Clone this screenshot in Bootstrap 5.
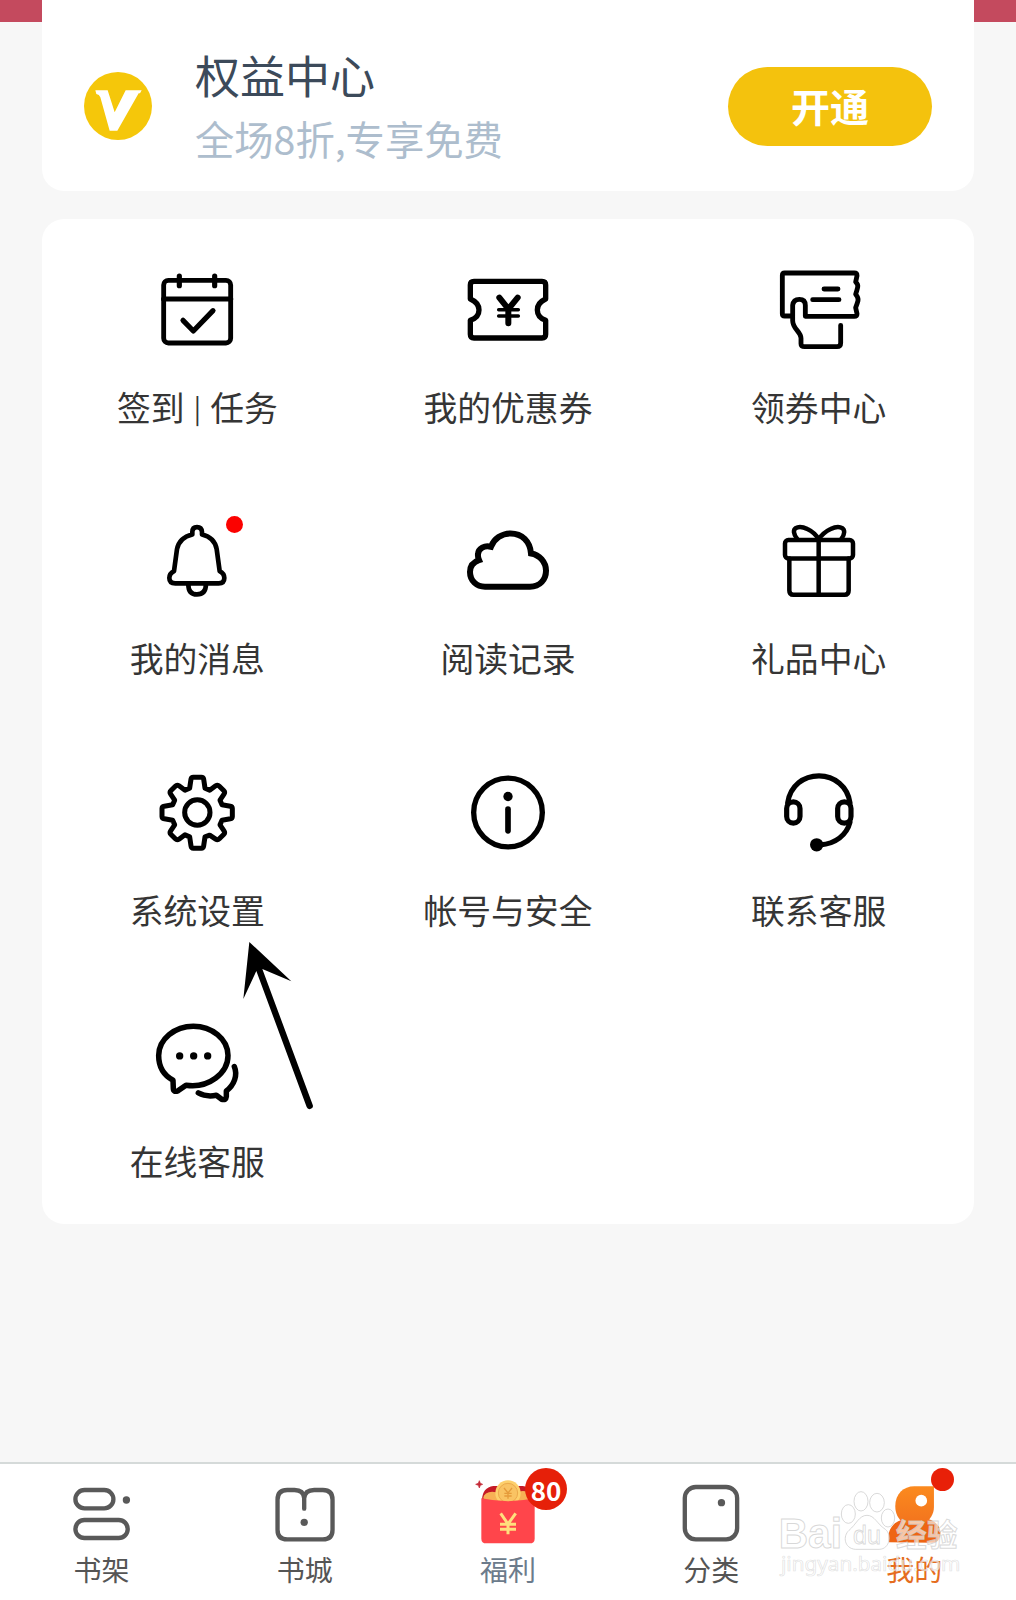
<!DOCTYPE html>
<html lang="zh-CN">
<head>
<meta charset="utf-8">
<meta name="viewport" content="width=device-width, initial-scale=1">
<title>我的</title>
<link href="https://cdn.jsdelivr.net/npm/bootstrap@5.3.0/dist/css/bootstrap.min.css" rel="stylesheet">
<style>
body{font-family:"Noto Sans CJK SC",sans-serif;background:#f7f7f7;color:#353535;height:1600px;overflow:hidden}
.page-top{background:linear-gradient(#c44a5e 0 21.5px,#f7f7f7 21.5px)}
.app-main{padding:0 42px;gap:28px}
.vip-card{height:191px;border-radius:0 0 22px 22px;padding:21px 42px 0}
.vip-logo{width:68px;height:68px;margin-right:43px}
.vip-title{font-size:45px;line-height:56px;color:#3c4a5a}
.vip-sub{font-size:39.3px;line-height:56px;color:#adbdcd;margin-top:7px}
.vip-btn,.vip-btn:hover{width:204px;height:79px;background:#f4c20d;color:#fff;font-size:39px;font-weight:700;line-height:1;border:0;padding:0 0 1px}
.menu-card{height:1005px;border-radius:22px}
.menu-cell{height:251.25px;padding-top:41px;font-size:33.8px;line-height:40px;color:#353535}
.menu-cell svg{width:100px;height:100px;margin-bottom:27px}
.label-bar{font-size:27px;margin:0 1.6px;position:relative;top:-2px}
.ico{fill:none;stroke:#000;stroke-linecap:round;stroke-linejoin:round;display:block}
.dot-red{width:17px;height:17px;background:#fb0200;left:225.5px;top:515.5px}
.tabbar{height:138px;border-top:2px solid #d5dad9}
.tab{width:20%;padding-top:2px;font-size:28px;line-height:36px;color:#555}
.tab svg{width:100px;height:80px;margin-bottom:5px}
.tab .ico{stroke:#595959}
.tab-badge{background:#e62009;color:#fff;width:42px;height:42px;left:525px;top:1468px;font-size:26px;font-weight:700;line-height:43px}
.tab-dot{background:#e82008;width:23px;height:23px;left:931px;top:1468px}
.pointer{left:230px;top:930px;width:100px;height:190px}
.wmark{left:770px;top:1480px;width:200px;height:110px}
</style>
<script src="https://cdn.jsdelivr.net/npm/bootstrap@5.3.0/dist/js/bootstrap.bundle.min.js"></script>
</head>
<body class="d-flex flex-column position-relative page-top">
<main class="app-main d-flex flex-column flex-grow-1">
  <section class="vip-card bg-white d-flex align-items-center">
    <svg class="vip-logo flex-shrink-0" viewBox="253 216 204 204"><circle cx="355" cy="318" r="102" fill="#f5c70a"/><path fill="#fff" d="M287 271H324L345 337L378 271H426L421 280H417L353 392H330L302 292Q299 283 290 282Z"/></svg>
    <div class="flex-grow-1">
      <div class="vip-title">权益中心</div>
      <div class="vip-sub">全场8折,专享免费</div>
    </div>
    <button class="btn vip-btn rounded-pill">开通</button>
  </section>

  <section class="menu-card bg-white">
    <div class="row g-0 text-center">
      <div class="col-4 menu-cell d-flex flex-column align-items-center">
        <svg class="ico" viewBox="142 30 300 300" stroke-width="14.5"><rect x="192" y="91" width="201" height="188" rx="14"/><path d="M192 147H393M239 78V107M345 78V107M250 211L281 243L340 182" stroke-width="15.5"/></svg><div>签到 <span class="label-bar">|</span> 任务</div></div>
      <div class="col-4 menu-cell d-flex flex-column align-items-center">
        <svg class="ico" viewBox="144 30 300 300" stroke-width="16"><path d="M192 94H396Q407 94 407 105V147Q382 158 382 180T407 211V253Q407 264 396 264H192Q181 264 181 253V211Q207 202 207 180T181 147V105Q181 94 192 94Z"/><path d="M268 143L295 177L323 143M295 177V220" stroke-width="18"/><path d="M266 179H325M266 198H325" stroke-width="10.5"/></svg>我的优惠券</div>
      <div class="col-4 menu-cell d-flex flex-column align-items-center">
        <svg class="ico" viewBox="146 30 300 300" stroke-width="14.5"><path d="M217 198H193Q186 198 186 191V76Q186 69 193 69H402Q410 69 410 77L406 96Q414 103 412 112T406 133Q415 144 413 152T406 173L410 191Q410 199 402 199H255V166Q255 148 237 148T217 166V212C217 237 242 244 242 265V281Q242 290 253 290H350Q361 290 361 279V226M311 117H353M277 149H356"/></svg>领券中心</div>

      <div class="col-4 menu-cell d-flex flex-column align-items-center">
        <svg class="ico" viewBox="142 33.75 300 300" stroke-width="14"><path d="M278 104V97Q278 82 292 82T307 97V104Q345 113 351 148L360 214Q374 221 374 235Q374 251 357 251H227Q209 251 209 235Q209 221 223 214L232 148Q239 113 278 104ZM266 254Q266 284 292 284T319 254"/></svg>我的消息</div>
      <div class="col-4 menu-cell d-flex flex-column align-items-center">
        <svg class="ico" viewBox="1074 33.75 300 300" stroke-width="18"><path stroke-linejoin="miter" d="M1155 261H1290C1320 261 1338 239 1338 213C1338 186 1318 165 1293 161C1290 125 1266 101 1232 101C1205 101 1182 117 1173 141C1154 136 1135 145 1134 163Q1133 172 1137 181C1118 187 1110 201 1110 217C1110 243 1130 261 1155 261Z"/></svg>阅读记录</div>
      <div class="col-4 menu-cell d-flex flex-column align-items-center">
        <svg class="ico" viewBox="146 33.75 300 300" stroke-width="13.5"><rect x="194" y="121" width="204" height="55" rx="10"/><path d="M207 176V272Q207 285 219 285H373Q385 285 385 272V176M295 121V285M231 118C205 85 234 74 261 88Q284 99 295 119Q308 99 331 88C358 74 386 85 363 118"/></svg>礼品中心</div>

      <div class="col-4 menu-cell d-flex flex-column align-items-center">
        <svg class="ico" viewBox="142 37.5 300 300" stroke-width="15"><g transform="translate(293 186)"><circle r="38"/><path d="M-12 -106H12Q18 -106 19 -100L23 -73L37 -67L55 -80Q61 -84 66 -79L79 -66Q84 -61 80 -55L68 -37L74 -23L99 -19Q105 -18 105 -12V12Q105 18 99 19L74 23L68 37L80 55Q84 61 79 66L66 79Q61 84 55 80L37 68L23 73L19 100Q18 107 12 107H-12Q-18 107 -19 100L-23 73L-37 67L-55 80Q-61 84 -66 79L-79 66Q-84 61 -80 55L-68 37L-74 23L-99 19Q-106 18 -106 12V-12Q-106 -18 -99 -19L-74 -23L-68 -37L-80 -55Q-84 -61 -79 -66L-66 -79Q-61 -84 -55 -80L-37 -67L-23 -73L-19 -100Q-18 -106 -12 -106Z"/></g></svg>系统设置</div>
      <div class="col-4 menu-cell d-flex flex-column align-items-center">
        <svg class="ico" viewBox="1074 37.5 300 300" stroke-width="16"><circle cx="1224" cy="186" r="103"/><circle cx="1224" cy="138" r="14" fill="#000" stroke="none"/><path d="M1224 176V241" stroke-width="17"/></svg>帐号与安全</div>
      <div class="col-4 menu-cell d-flex flex-column align-items-center">
        <svg class="ico" viewBox="146 787.5 300 300" stroke-width="15.5"><rect x="199" y="904" width="40" height="64" rx="20"/><rect x="352" y="904" width="40" height="64" rx="20"/><path d="M202 907C210 855 250 826 296 826S382 858 389 907M389 965C379 1004 345 1030 300 1033"/><circle cx="289" cy="1033" r="20" fill="#000" stroke="none"/></svg>联系客服</div>

      <div class="col-4 menu-cell d-flex flex-column align-items-center">
        <svg class="ico" viewBox="142 281.25 300 300" stroke-width="16.5"><path d="M220 480C190 464 177 436 177 406C177 356 226 318 281 318S385 356 385 406C385 459 327 505 259 495L236 511Q221 517 221 505ZM404 439C415 465 403 495 380 512V529Q379 541 366 537L350 525Q320 531 296 518"/><g fill="#000" stroke="none"><circle cx="240" cy="407" r="11"/><circle cx="282" cy="407" r="11"/><circle cx="324" cy="407" r="11"/></g></svg>在线客服</div>
    </div>
  </section>
</main>

<nav class="tabbar bg-white d-flex text-center">
  <div class="tab d-flex flex-column align-items-center">
    <svg class="ico" viewBox="34.8 48 300 240" stroke-width="13"><rect x="105" y="120" width="114" height="55" rx="27.5"/><rect x="105" y="210" width="157" height="54" rx="27"/><circle cx="258" cy="150" r="11" fill="#595959" stroke="none"/></svg>书架</div>
  <div class="tab d-flex flex-column align-items-center">
    <svg class="ico" viewBox="644.4 48 300 240" stroke-width="13"><path d="M792 176V145Q790 120 763 120H741Q712 120 712 149V239Q712 268 741 268H848Q877 268 877 239V149Q877 120 848 120H822Q794 120 792 145"/><circle cx="792" cy="217" r="11" fill="#595959" stroke="none"/></svg>书城</div>
  <div class="tab d-flex flex-column align-items-center" style="color:#6c7b8b">
    <svg class="d-block" viewBox="54 48 300 240"><path d="M126 150Q127 113 160 108H248Q282 112 284 150Z" fill="#c51a26"/><ellipse cx="157" cy="143" rx="27" ry="18" fill="#f7b055"/><ellipse cx="249" cy="143" rx="30" ry="20" fill="#f7b055"/><circle cx="204" cy="129" r="38" fill="#fdd06c"/><circle cx="204" cy="129" r="29" fill="#f9c363" stroke="#eca94b" stroke-width="3"/><path d="M192 114L204 129L216 114M204 129V146M193 130H215M193 138H215" fill="none" stroke="#e59b3b" stroke-width="4"/><path d="M124 145Q204 162 284 145V266Q284 280 269 280H139Q124 280 124 266Z" fill="#ff454b"/><path d="M182 190L204 222L227 190M204 220V253M180 223H228M180 238H228" fill="none" stroke="#ffdf7d" stroke-width="9"/><path d="M118 92L121 100L128 103L121 106L118 114L115 106L107 103L115 100Z" fill="#c42936" stroke="#c42936" stroke-width="2"/></svg>福利</div>
  <div class="tab d-flex flex-column align-items-center">
    <svg class="ico" viewBox="663.6 48 300 240" stroke-width="13"><rect x="735" y="111" width="157" height="157" rx="33"/><circle cx="845" cy="158" r="11" fill="#595959" stroke="none"/></svg>分类</div>
  <div class="tab d-flex flex-column align-items-center" style="color:#e56d20">
    <svg class="d-block" viewBox="313.2 48 300 240"><defs><linearGradient id="mineTop" x2="0" y2="1"><stop stop-color="#fb8a1e"/><stop offset="1" stop-color="#f3741e"/></linearGradient></defs><path d="M388 277C380 237 404 211 440 207H506C536 215 550 242 538 268Q533 278 520 278Z" fill="#ee6514"/><path d="M464 109H523V171C523 193 511 210 493 220H432C414 204 407 190 407 168C407 132 432 109 464 109Z" fill="url(#mineTop)"/><circle cx="485" cy="152" r="17.5" fill="#fff"/></svg>我的</div>
</nav>

<span class="dot-red rounded-circle position-absolute"></span>
<span class="tab-badge rounded-circle position-absolute text-center">80</span>
<span class="tab-dot rounded-circle position-absolute"></span>
<svg class="pointer position-absolute" viewBox="390 30 300 570"><path d="M448 66L574 184L487 147L638 554A9.5 9.5 0 0 1 620 561L469 153L430 237Z"/></svg>
<svg class="wmark position-absolute" viewBox="30 90 600 330" fill="#fff" fill-opacity=".65" stroke="#ccc" stroke-opacity=".75" stroke-width="3">
  <text x="56" y="295" font-family="Liberation Sans" font-weight="700" font-size="128" textLength="190" lengthAdjust="spacingAndGlyphs">Bai</text>
  <ellipse cx="303" cy="154" rx="21" ry="29"/><ellipse cx="351" cy="158" rx="22" ry="28"/><ellipse cx="265" cy="192" rx="21" ry="28"/><ellipse cx="384" cy="204" rx="20" ry="27"/>
  <path d="M321 196C344 196 351 222 376 238C396 253 390 297 358 298H286C252 295 248 258 267 241C289 223 297 196 321 196Z"/>
  <text x="279" y="282" font-family="Liberation Sans" font-size="76" textLength="84" lengthAdjust="spacingAndGlyphs" stroke-width="2.5">du</text>
  <text x="408" y="287" font-family="Noto Sans CJK SC" font-weight="700" font-size="92">经验</text>
  <text x="63" y="364" font-family="Noto Sans" font-size="61" textLength="538" lengthAdjust="spacingAndGlyphs" stroke-width="2" stroke-opacity=".6">jingyan.baidu.com</text>
</svg>
</body>
</html>
